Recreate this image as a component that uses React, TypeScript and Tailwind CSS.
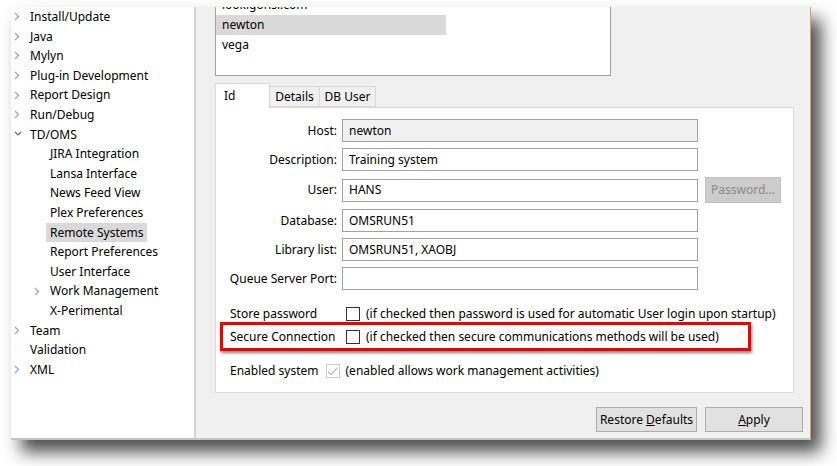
import React from "react";

const font = { fontFamily: '"Noto Sans", "Open Sans", sans-serif' };

type TreeItem = {
  label: string;
  depth: number;
  chevron?: "right" | "down";
  selected?: boolean;
};

const tree: TreeItem[] = [
  { label: "Install/Update", depth: 0, chevron: "right" },
  { label: "Java", depth: 0, chevron: "right" },
  { label: "Mylyn", depth: 0, chevron: "right" },
  { label: "Plug-in Development", depth: 0, chevron: "right" },
  { label: "Report Design", depth: 0, chevron: "right" },
  { label: "Run/Debug", depth: 0, chevron: "right" },
  { label: "TD/OMS", depth: 0, chevron: "down" },
  { label: "JIRA Integration", depth: 1 },
  { label: "Lansa Interface", depth: 1 },
  { label: "News Feed View", depth: 1 },
  { label: "Plex Preferences", depth: 1 },
  { label: "Remote Systems", depth: 1, selected: true },
  { label: "Report Preferences", depth: 1 },
  { label: "User Interface", depth: 1 },
  { label: "Work Management", depth: 1, chevron: "right" },
  { label: "X-Perimental", depth: 1 },
  { label: "Team", depth: 0, chevron: "right" },
  { label: "Validation", depth: 0 },
  { label: "XML", depth: 0, chevron: "right" },
];

function Chevron({ dir }: { dir: "right" | "down" }) {
  if (dir === "down") {
    return (
      <svg width="8" height="6" viewBox="0 0 8 6" className="shrink-0">
        <polyline points="1,1 4,4 7,1" fill="none" stroke="#6b6b6b" strokeWidth="1.2" />
      </svg>
    );
  }
  return (
    <svg width="6" height="9" viewBox="0 0 6 9" className="shrink-0">
      <polyline points="1,1 4.5,4.5 1,8" fill="none" stroke="#a6a6a6" strokeWidth="1.3" />
    </svg>
  );
}

function TreeRow({ item }: { item: TreeItem }) {
  const indent = item.depth === 0 ? "pl-[3px]" : "pl-[23px]";
  return (
    <div className={`flex items-center h-[19.6px] ${indent}`}>
      <div className="w-[12px] flex items-center">
        {item.chevron && <Chevron dir={item.chevron} />}
      </div>
      <span className={`px-[4px] leading-[19.6px] ${item.selected ? "bg-[#d9d9d9]" : ""}`}>
        {item.label}
      </span>
    </div>
  );
}

function Field({ label, value, disabled }: { label: string; value: string; disabled?: boolean }) {
  return (
    <div className="flex items-center h-[23px]">
      <div className="w-[112px] flex justify-end pr-[5px] whitespace-nowrap">{label}</div>
      <div
        className={`w-[356px] h-[23px] border border-[#a3a3a3] px-[6px] flex items-center ${
          disabled ? "bg-[#f0f0f0]" : "bg-white"
        }`}
      >
        {value}
      </div>
    </div>
  );
}

function Check({ disabled, checked }: { disabled?: boolean; checked?: boolean }) {
  return (
    <div
      className={`w-[14px] h-[14px] border bg-white flex items-center justify-center shrink-0 ${
        disabled ? "border-[#cccccc]" : "border-[#333333]"
      }`}
    >
      {checked && (
        <svg width="11" height="9" viewBox="0 0 11 9">
          <polyline points="1,4.5 4,7.5 10,1" fill="none" stroke="#bfbfbf" strokeWidth="1.3" />
        </svg>
      )}
    </div>
  );
}

export default function App() {
  return (
    <div className="w-[837px] h-[466px] bg-white overflow-hidden text-[12px] text-black" style={font}>
      <div className="ml-[11px] mt-[7px] w-[800px] h-[433px] flex bg-[#f0f0f0] border-r border-[#d1a654] border-b-2 border-b-[#c4c4c4] shadow-[10px_12px_16px_rgba(0,0,0,0.7)]">
        {/* tree */}
        <div className="w-[185px] h-full bg-white border-r-2 border-[#d4d4d4] shrink-0">
          {tree.map((item) => (
            <TreeRow key={item.label} item={item} />
          ))}
        </div>

        {/* right side */}
        <div className="flex-1 flex flex-col pl-[19px]">
          <div className="w-[396px] h-[69px] bg-white border-x border-b border-[#a0a0a0] overflow-hidden">
            <div className="flex flex-col mt-[-12px]">
              <div className="w-[230px] h-[20px] pl-[6px] flex items-center">lookigonsi.com</div>
              <div className="w-[230px] h-[20px] pl-[6px] flex items-center bg-[#d9d9d9]">newton</div>
              <div className="w-[230px] h-[20px] pl-[6px] flex items-center">vega</div>
            </div>
          </div>

          {/* tabs */}
          <div className="flex items-end mt-[7px] h-[24px]">
            <div className="w-[55px] h-[25px] bg-white border border-b-0 border-[#d9d9d9] pl-[8px] pt-[3px] relative z-10 mb-[-1px]">
              Id
            </div>
            <div className="w-[50px] h-[21px] bg-[#f0f0f0] border border-l-0 border-[#d9d9d9] flex items-center justify-center">
              Details
            </div>
            <div className="w-[56px] h-[21px] bg-[#f0f0f0] border border-l-0 border-[#d9d9d9] flex items-center justify-center">
              DB User
            </div>
          </div>

          <div className="w-[579px] h-[286px] bg-white border border-[#d9d9d9] pl-[14px] pt-[11px] flex flex-col">
            <div className="flex flex-col gap-[6px]">
              <Field label="Host:" value="newton" disabled />
              <Field label="Description:" value="Training system" />
              <div className="flex items-center h-[26px]">
                <Field label="User:" value="HANS" />
                <div className="ml-[7px] w-[76px] h-[26px] bg-[#cccccc] border border-[#bfbfbf] text-[#8a8a8a] flex items-center justify-center">
                  Password...
                </div>
              </div>
              <Field label="Database:" value="OMSRUN51" />
              <Field label="Library list:" value="OMSRUN51, XAOBJ" />
              <Field label="Queue Server Port:" value="" />
            </div>

            <div className="flex items-center h-[18px] mt-[15px]">
              <div className="w-[116px]">Store password</div>
              <Check />
              <span className="ml-[6px]">(if checked then password is used for automatic User login upon startup)</span>
            </div>

            <div className="flex items-center w-[531px] h-[29px] ml-[-10px] mt-[-1px] pl-[7px] border-[3px] border-[#ee0000] shadow-[1px_2px_3px_rgba(0,0,0,0.5)]">
              <div className="w-[116px]">Secure Connection</div>
              <Check />
              <span className="ml-[6px]">(if checked then secure communications methods will be used)</span>
            </div>

            <div className="flex items-center h-[18px] mt-[11px]">
              <span>Enabled system</span>
              <div className="ml-[7px]">
                <Check disabled checked />
              </div>
              <span className="ml-[6px]">(enabled allows work management activities)</span>
            </div>
          </div>

          <div className="flex justify-end gap-[8px] mt-[14px] pr-[7px]">
            <div className="w-[101px] h-[25px] bg-[#e1e1e1] border border-[#adadad] flex items-center justify-center">
              <span>
                Restore <span className="underline">D</span>efaults
              </span>
            </div>
            <div className="w-[98px] h-[25px] bg-[#e1e1e1] border border-[#adadad] flex items-center justify-center">
              <span>
                <span className="underline">A</span>pply
              </span>
            </div>
          </div>
        </div>
      </div>
    </div>
  );
}
